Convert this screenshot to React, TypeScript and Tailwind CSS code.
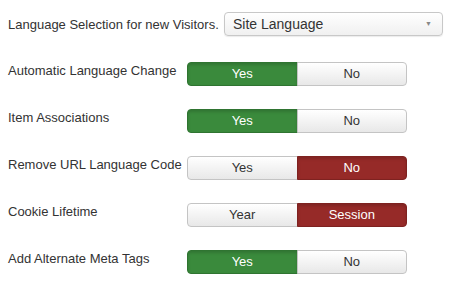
type Toggle = {
  label: string
  left: string
  right: string
  active: "left" | "right"
  color: "green" | "red"
}

const rows: Toggle[] = [
  { label: "Automatic Language Change", left: "Yes", right: "No", active: "left", color: "green" },
  { label: "Item Associations", left: "Yes", right: "No", active: "left", color: "green" },
  { label: "Remove URL Language Code", left: "Yes", right: "No", active: "right", color: "red" },
  { label: "Cookie Lifetime", left: "Year", right: "Session", active: "right", color: "red" },
  { label: "Add Alternate Meta Tags", left: "Yes", right: "No", active: "left", color: "green" },
]

const SegButton = ({ text, on, color, side }) => {
  const base = "flex-1 flex items-center justify-center text-[13px] border"
  const round = side === "left" ? "rounded-l-[4px]" : "rounded-r-[4px] -ml-px"
  if (on) {
    const bg =
      color === "green"
        ? "bg-[#3a8a3c] border-[#2f7431] text-white"
        : "bg-[#962a28] border-[#7e2220] text-white"
    return (
      <span className={`${base} ${round} ${bg} shadow-[inset_0_2px_3px_rgba(0,0,0,0.15)]`}>
        {text}
      </span>
    )
  }
  return (
    <span
      className={`${base} ${round} bg-gradient-to-b from-white to-[#e8e8e8] border-[#c4c4c4] text-[#333]`}
    >
      {text}
    </span>
  )
}

export default function App() {
  return (
    <div
      className="w-[450px] h-[288px] bg-white pl-2 pt-[12px] text-[#333]"
      style={{ fontFamily: '"Liberation Sans", Arial, sans-serif' }}
    >
      <div className="flex items-center h-[24px]">
        <span className="text-[13px] w-[216px] mt-[2px]">Language Selection for new Visitors.</span>
        <div className="w-[219px] h-[24px] flex items-center justify-between border border-[#c8c8c8] rounded-[4px] bg-gradient-to-b from-white to-[#f0f0f0] pl-[8px] pr-[10px] shadow-[0_1px_1px_rgba(0,0,0,0.08)]">
          <span className="text-[14px] text-[#333]">Site Language</span>
          <span className="text-[7px] text-[#888]">▼</span>
        </div>
      </div>
      <div className="flex flex-col gap-[23px] mt-[26px]">
        {rows.map((r) => (
          <div key={r.label} className="flex items-start">
            <span className="w-[179px] text-[13px] leading-[18px]">{r.label}</span>
            <div className="flex w-[220px] h-[24px]">
              <SegButton text={r.left} on={r.active === "left"} color={r.color} side="left" />
              <SegButton text={r.right} on={r.active === "right"} color={r.color} side="right" />
            </div>
          </div>
        ))}
      </div>
    </div>
  )
}
